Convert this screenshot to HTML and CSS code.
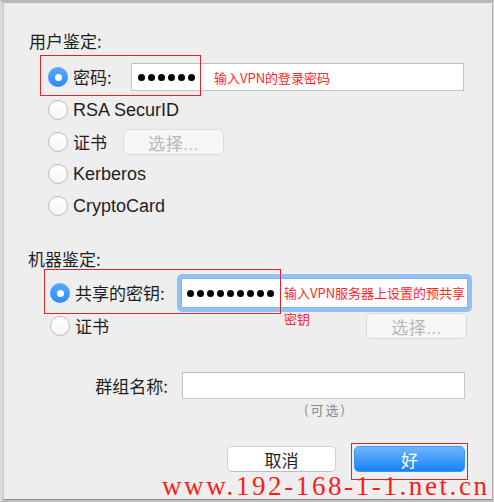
FILE: index.html
```html
<!DOCTYPE html>
<html lang="zh-CN">
<head>
<meta charset="utf-8">
<title>VPN 鉴定</title>
<link rel="stylesheet" href="styles.css">
</head>
<body>
<div class="window">
  <div class="dialog">
    <div class="heading">用户鉴定:</div>
    <div class="group user">
      <div class="row r1">
        <span class="radio on"></span>
        <span class="label w58">密码:</span>
        <div class="field f1">
          <span class="dots"><i></i><i></i><i></i><i></i><i></i><i></i></span>
          <span class="note">输入VPN的登录密码</span>
        </div>
      </div>
      <div class="row">
        <span class="radio"></span>
        <span class="label latin">RSA SecurID</span>
      </div>
      <div class="row">
        <span class="radio"></span>
        <span class="label w50">证书</span>
        <span class="btn disabled b1">选择...</span>
      </div>
      <div class="row">
        <span class="radio"></span>
        <span class="label latin">Kerberos</span>
      </div>
      <div class="row">
        <span class="radio"></span>
        <span class="label latin">CryptoCard</span>
      </div>
    </div>

    <div class="heading h2">机器鉴定:</div>
    <div class="group machine">
      <div class="row r6">
        <span class="radio on"></span>
        <span class="label w102">共享的密钥:</span>
        <div class="ring">
          <div class="field f6">
            <span class="dots"><i></i><i></i><i></i><i></i><i></i><i></i><i></i><i></i><i></i></span>
          </div>
          <span class="note note2">输入VPN服务器上设置的预共享<br>密钥</span>
        </div>
      </div>
      <div class="row r7">
        <span class="radio"></span>
        <span class="label">证书</span>
        <span class="btn disabled b2">选择...</span>
      </div>
    </div>

    <div class="row grp">
      <span class="label">群组名称:</span>
      <div class="field f7"></div>
    </div>
    <div class="optional">(可选)</div>

    <div class="actions">
      <span class="btn cancel">取消</span>
      <span class="btn ok">好</span>
    </div>
  </div>
</div>

<div class="mark m1"></div>
<div class="mark m2"></div>
<div class="mark m3"></div>
<div class="watermark">www.192-168-1-1.net.cn</div>
</body>
</html>
```

FILE: styles.css
```css
html, body {
  margin: 0;
  padding: 0;
}
body {
  background: #bdbdbd;
  font-family: "Liberation Sans", "Noto Sans CJK SC", sans-serif;
  color: #1e1e1e;
  width: 494px;
  height: 502px;
  overflow: hidden;
}
.window {
  box-sizing: border-box;
  width: 494px;
  height: 502px;
  border-top: 3px solid #b7b7b7;
  border-left: 3px solid #d8d8d8;
  border-right: 1px solid #dedede;
  border-bottom: 2px solid #bdbdbd;
  background: #ededed;
}
.dialog {
  box-sizing: border-box;
  height: 497px;
  border-left: 1px solid #c8c8c8;
  border-right: 1px solid #ababab;
  border-bottom: 1px solid #8e8e8e;
  background: #eeeeee;
  overflow: hidden;
}
.heading {
  margin: 28px 0 0 25px;
  height: 20px;
  line-height: 20px;
  font-size: 17px;
  font-family: "Noto Sans CJK SC", sans-serif;
}
.heading.h2 {
  margin-top: 27px;
  margin-left: 24px;
}
.group.user {
  margin-top: 9px;
  padding-left: 44px;
}
.group.machine {
  margin-top: 5px;
  padding-left: 46px;
}
.row {
  display: flex;
  align-items: center;
  height: 32px;
}
.row.r1 { height: 34px; }
.row.r6 { height: 38px; }
.row.r7 { height: 26px; margin-top: 1px; }
.radio {
  box-sizing: border-box;
  flex: none;
  width: 20px;
  height: 20px;
  border-radius: 50%;
  border: 1px solid #bdbdbd;
  background: linear-gradient(#ffffff, #f6f6f6);
  margin-right: 5px;
  display: flex;
  align-items: center;
  justify-content: center;
}
.radio.on {
  border: none;
  background: linear-gradient(#5aaafd, #2a8cf8);
}
.radio.on::after {
  content: "";
  width: 7px;
  height: 7px;
  border-radius: 50%;
  background: #ffffff;
}
.label {
  font-size: 17px;
  font-family: "Noto Sans CJK SC", sans-serif;
  line-height: 20px;
  white-space: nowrap;
}
.label.latin {
  font-family: "Liberation Sans", sans-serif;
  font-size: 18px;
}
.w58 { width: 58px; }
.w50 { width: 50px; }
.w102 { width: 102px; }
.field {
  box-sizing: border-box;
  background: #ffffff;
  border: 1px solid #c6c6c6;
  border-top-color: #bdbdbd;
  display: flex;
  align-items: center;
}
.f1 {
  width: 333px;
  height: 28px;
  padding-left: 6px;
}
.dots {
  display: flex;
  gap: 3px;
}
.dots i {
  display: block;
  width: 7px;
  height: 7px;
  border-radius: 50%;
  background: #000000;
}
.note {
  color: #ff2626;
  font-size: 13px;
  font-family: "Noto Sans CJK SC", sans-serif;
  margin-left: 19px;
  white-space: nowrap;
}
.ring {
  position: relative;
  box-sizing: border-box;
  width: 295px;
  height: 38px;
  padding: 4px;
  border-radius: 5px;
  background: #94c0f4;
}
.f6 {
  width: 100%;
  height: 100%;
  border: 1px solid #86b5ee;
  padding-left: 5px;
}
.note2 {
  position: absolute;
  left: 107px;
  top: 6px;
  margin: 0;
  line-height: 26px;
}
.btn {
  box-sizing: border-box;
  display: flex;
  align-items: center;
  justify-content: center;
  height: 26px;
  border-radius: 5px;
  font-size: 17px;
  font-family: "Liberation Sans", "Noto Sans CJK SC", sans-serif;
}
.btn.disabled {
  width: 101px;
  background: #f6f6f6;
  border: 1px solid #dcdcdc;
  color: #b9b9b9;
  letter-spacing: 0.5px;
}
.b2 {
  margin-left: auto;
  margin-right: 25px;
}
.row.grp {
  margin-top: 33px;
  height: 27px;
  justify-content: flex-end;
  padding-right: 27px;
}
.grp .label {
  margin-right: 14px;
}
.f7 {
  width: 283px;
  height: 27px;
}
.optional {
  margin: 3px 0 0 180px;
  width: 283px;
  text-align: center;
  height: 16px;
  line-height: 16px;
  font-size: 13px;
  letter-spacing: 2px;
  color: #8a8a8a;
  font-family: "Noto Sans CJK SC", sans-serif;
}
.actions {
  margin-top: 28px;
  display: flex;
  justify-content: flex-end;
  gap: 18px;
  padding-right: 27px;
}
.btn.cancel {
  width: 109px;
  background: #ffffff;
  border: 1px solid #d0d0d0;
  border-bottom-color: #bdbdbd;
  color: #1e1e1e;
}
.btn.ok {
  width: 111px;
  background: linear-gradient(#6fb5fc, #1683fb);
  color: #ffffff;
  border: 1px solid #3e93f0;
}
.mark {
  position: absolute;
  border: 1px solid #e3232c;
}
.m1 { left: 40px; top: 55px; width: 159px; height: 39px; }
.m2 { left: 44px; top: 269px; width: 235px; height: 43px; }
.m3 { left: 351px; top: 443px; width: 115px; height: 35px; }
.watermark {
  position: absolute;
  left: 162px;
  top: 471px;
  width: 330px;
  overflow: hidden;
  white-space: nowrap;
  font-family: "Liberation Serif", serif;
  font-size: 27px;
  line-height: 30px;
  letter-spacing: 2.6px;
  color: #ff1a1a;
}
```
